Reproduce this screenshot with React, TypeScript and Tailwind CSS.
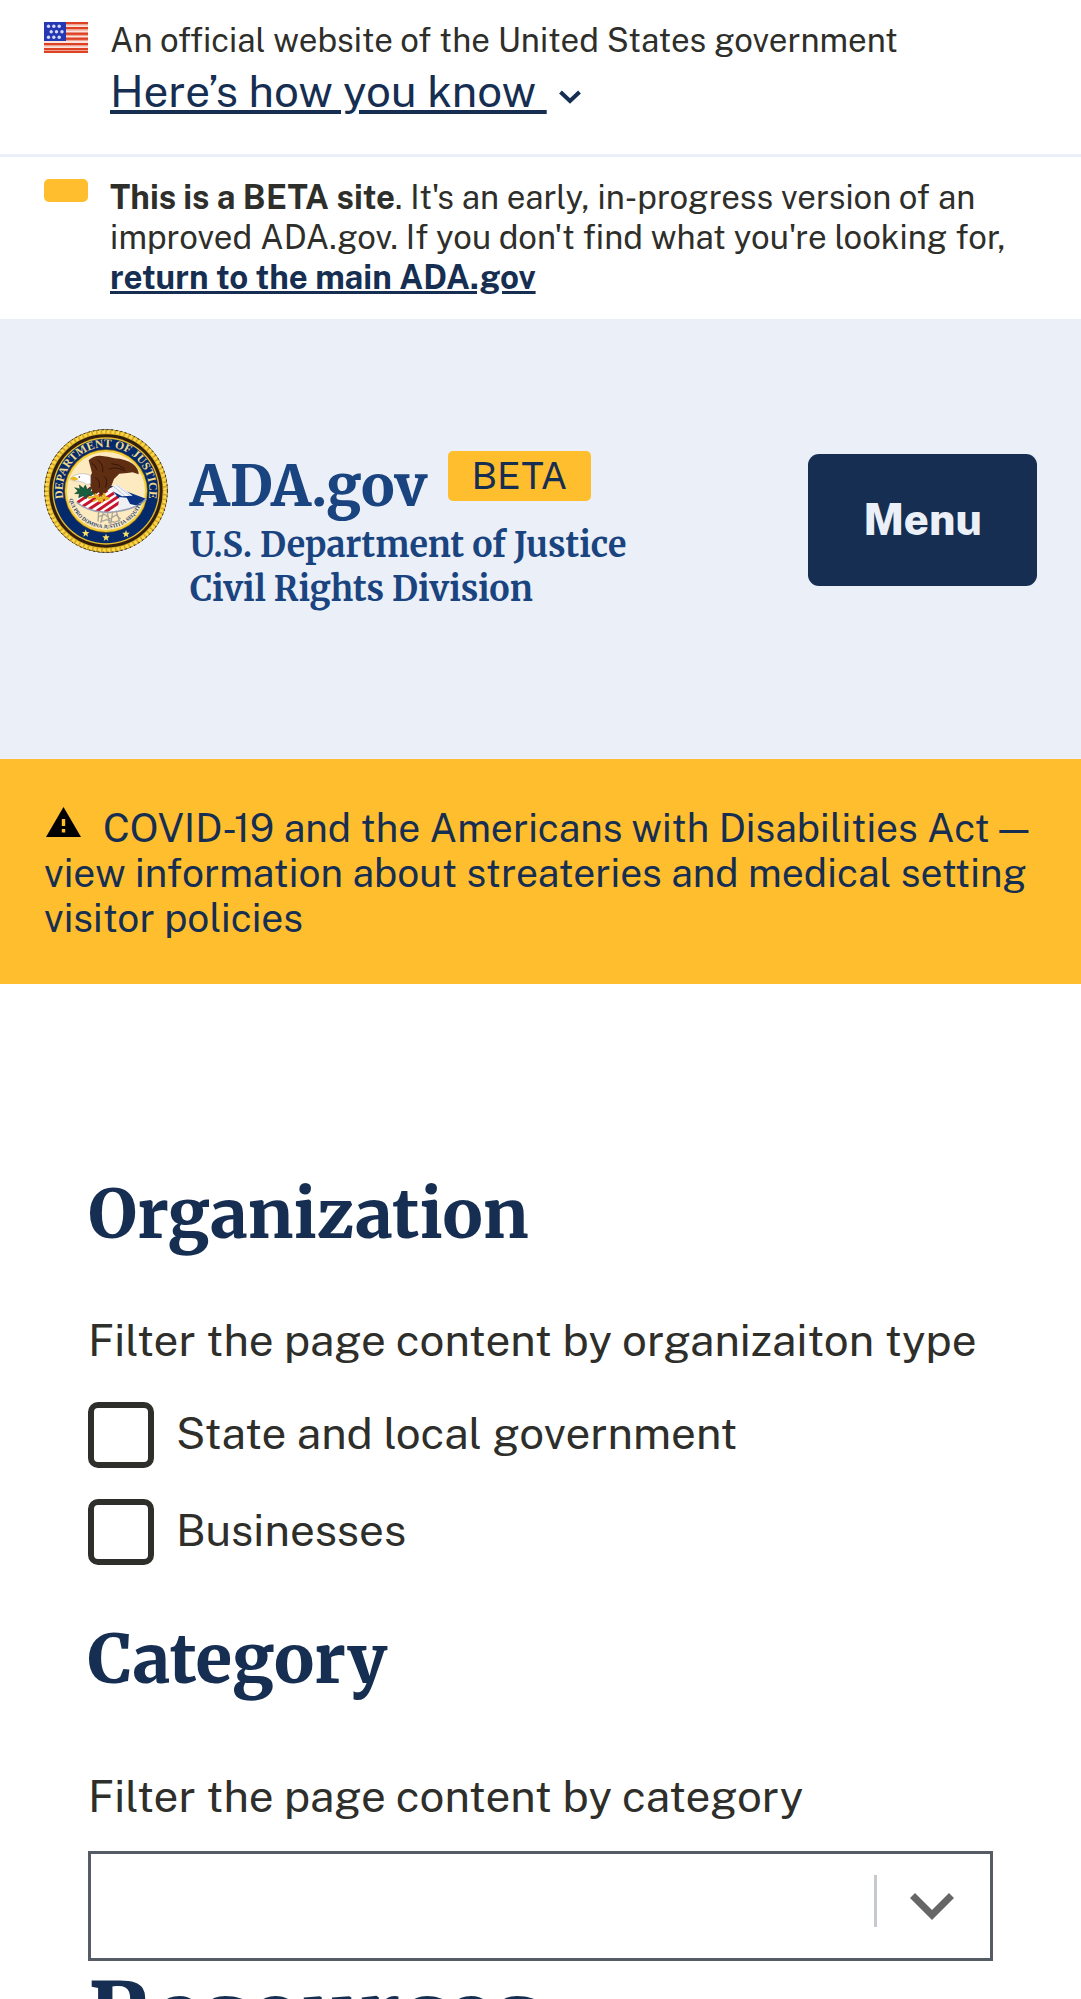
function FlagIcon() {
  return (
    <svg viewBox="0 0 44 31" className="mt-0.5 h-[31px] w-11 shrink-0" role="img" aria-label="U.S. flag">
      <rect width="44" height="31" fill="#fbe3de" />
      {[0, 5, 10.5, 15.5, 21, 26, 29].map((y) => (
        <rect key={y} y={y} width="44" height="2.4" fill="#dd4124" />
      ))}
      {[2.4, 7.6, 13, 18, 23.4].map((y) => (
        <rect key={y} y={y} width="44" height="1" fill="#f1a797" />
      ))}
      <rect width="22" height="19" fill="#2438b4" />
      {[
        [4.5, 4.3], [9.8, 4.3], [15.2, 4.3],
        [7.2, 9.7], [12.5, 9.7], [18, 9.7],
        [4.5, 15.2], [9.8, 15.2], [15.2, 15.2],
      ].map(([x, y]) => (
        <circle key={`${x}-${y}`} cx={x} cy={y} r="1.7" fill="#d5daf5" />
      ))}
    </svg>
  );
}

function JusticeSeal() {
  return (
    <svg viewBox="42 56 372 372" className="size-[124px] shrink-0" role="img" aria-label="Department of Justice seal">
      <defs>
        <path id="seal-top" d="M 103 276 A 130 130 0 1 1 353 276" />
        <path id="seal-motto" d="M 116 226 A 113 113 0 1 0 340 226" />
        <clipPath id="seal-shield">
          <path d="M140 268 L180 228 L238 224 L350 266 Q322 298 240 306 Q178 306 140 276 Z" />
        </clipPath>
      </defs>
      <circle cx="228" cy="242" r="185" fill="#2b2110" />
      <circle cx="228" cy="242" r="177" fill="none" stroke="#d9a520" strokeWidth="14" />
      <circle cx="228" cy="242" r="178" fill="none" stroke="#f8d84a" strokeWidth="11" strokeDasharray="9 5" />
      <circle cx="228" cy="242" r="184" fill="none" stroke="#2b2110" strokeWidth="3" strokeDasharray="5 9" />
      <circle cx="228" cy="242" r="166" fill="#3a1d0c" />
      <circle cx="228" cy="242" r="161" fill="#e6bd2c" />
      <circle cx="228" cy="242" r="157" fill="#052a6b" />
      <circle cx="228" cy="242" r="125" fill="#8a6410" />
      <circle cx="228" cy="242" r="123" fill="#f3cf3e" />
      <circle cx="228" cy="242" r="117" fill="#fdeac0" />
      <text fill="#f0d98a" fontSize="35" fontFamily="'Liberation Serif', serif" textAnchor="middle">
        <textPath href="#seal-top" startOffset="50%">DEPARTMENT OF JUSTICE</textPath>
      </text>
      <g clipPath="url(#seal-shield)">
        <rect x="130" y="215" width="230" height="95" fill="#ffffff" />
        <g stroke="#c8152f" strokeWidth="9">
          <path d="M132 262 L184 232" />
          <path d="M140 278 L206 234" />
          <path d="M152 292 L232 240" />
          <path d="M172 300 L252 248" />
          <path d="M198 304 L266 258" />
          <path d="M224 306 L280 268" />
        </g>
        <path d="M232 222 L355 262 L330 288 L276 276 Z" fill="#0b3384" />
        <path d="M268 260 L290 262 L310 298 L262 306 Z" fill="#eef0f4" />
      </g>
      <path d="M140 276 Q178 307 240 306 Q322 298 348 266" fill="none" stroke="#9ba3b5" strokeWidth="5" />
      <path d="M236 236 L262 222 L308 256 L276 258 Z" fill="#f2f4f8" />
      <path d="M250 228 L284 256 M260 224 L300 256" stroke="#a9b2c8" strokeWidth="2" />
      <path d="M206 304 l-2 30 M220 306 l-8 32 M232 306 l6 34 M248 304 l-6 38 M258 300 l10 32 M204 320 l20 -8 l16 14 l18 -12 l14 12 M212 334 l18 -6 l22 8 l18 -6" fill="none" stroke="#a9a697" strokeWidth="4" />
      <g fill="#17603f" stroke="#0b3b27" strokeWidth="1.5">
        <path d="M134 232 L150 236 L148 224 L160 234 L166 224 L172 238 L184 230 L182 244 L196 244 L184 256 L174 254 L168 266 L160 256 L146 262 L148 250 L134 250 L144 242 Z" />
      </g>
      <path
        d="M176 150 Q188 136 210 136 Q236 138 254 144 Q286 146 308 160 Q326 174 326 192 L308 186 L292 188 L268 190 L252 206 L246 222 Q240 238 228 244 L216 262 L206 246 L192 256 L184 234 L176 206 L186 188 Z"
        fill="#5f2d12"
      />
      <path d="M184 158 q14 6 16 20 M202 148 q20 14 16 38 M196 202 q16 8 12 30 M222 198 q14 10 4 34 M244 160 q22 0 40 16 M236 176 q24 -8 50 6" fill="none" stroke="#34170a" strokeWidth="3" />
      <path d="M122 204 Q136 190 158 190 Q172 190 182 196 L182 220 L170 222 Q160 214 144 212 Q130 214 122 208 Z" fill="#ffffff" stroke="#9ba3b5" strokeWidth="1.5" />
      <path d="M120 206 Q124 198 136 200 L146 206 L134 212 Z" fill="#e8b81f" />
      <circle cx="148" cy="200" r="2.5" fill="#222222" />
      <path d="M196 252 l6 14 l-10 6 M204 256 l4 16 l8 -2 M222 250 l6 18 l8 -4 M218 256 l-2 20 M176 262 l26 -4 M206 264 l26 -2" fill="none" stroke="#e3b51f" strokeWidth="6" strokeLinecap="round" />
      <text fill="#1d3d6d" fontSize="16" fontWeight="700" fontFamily="'Liberation Serif', serif" textAnchor="middle">
        <textPath href="#seal-motto" startOffset="50%">QUI PRO DOMINA JUSTITIA SEQUITUR</textPath>
      </text>
      {[
        [167, 369],
        [228, 382],
        [288, 371],
      ].map(([x, y]) => (
        <path
          key={x}
          transform={`translate(${x} ${y})`}
          d="M0 -12 L3 -4 L11 -4 L5 2 L7 10 L0 5 L-7 10 L-5 2 L-11 -4 L-3 -4 Z"
          fill="#f7dd6a"
        />
      ))}
    </svg>
  );
}

function Heading({ children }: { children: string }) {
  return (
    <h2 className="font-['Merriweather','Noto_Serif',serif] text-[67px] leading-[80px] font-extrabold text-[#162e51]">
      {children}
    </h2>
  );
}

function OrganizationOption({ id, label }: { id: string; label: string }) {
  return (
    <div className="flex items-start gap-[22px]">
      <input
        id={id}
        type="checkbox"
        className="size-[66px] shrink-0 appearance-none rounded-[10px] border-[6px] border-[#2e2e2a] bg-white checked:bg-[#162e51]"
      />
      <label htmlFor={id} className="text-[44px] leading-[62px]">
        {label}
      </label>
    </div>
  );
}

export default function App() {
  return (
    <div className="bg-white font-['Public_Sans','Inter',sans-serif] text-[#2e2e2a]">
      <section
        aria-label="Official government website"
        className="flex items-start gap-[22px] border-b-[3px] border-[#ebeff7] px-11 pt-5 pb-[38px]"
      >
        <FlagIcon />
        <div>
          <p className="text-[33px] leading-10">An official website of the United States government</p>
          <button type="button" className="mt-1.5 flex items-center gap-3 text-[44px] leading-[50px] text-[#162e51]">
            <span className="whitespace-pre underline">Here’s how you know </span>
            <svg viewBox="0 0 22 14" className="mt-3 h-3.5 w-[22px]" fill="none" stroke="currentColor" strokeWidth="4" aria-hidden="true">
              <path d="M1.5 2 L11 11 L20.500 2" />
            </svg>
          </button>
        </div>
      </section>

      <section aria-label="Beta notice" className="flex items-start gap-[22px] px-11 pt-5 pb-[22px]">
        <span className="mt-0.5 h-[23px] w-11 shrink-0 rounded-[5px] bg-[#ffbe2e]" />
        <p className="text-[33px] leading-10">
          <strong className="font-bold">This is a BETA site</strong>. It's an early, in-progress version of an improved
          ADA.gov. If you don't find what you're looking for,{' '}
          <a href="#main-site" className="font-bold text-[#162e51] underline">
            return to the main ADA.gov
          </a>
        </p>
      </section>

      <header className="flex items-start justify-between bg-[#ebeff7] px-11 pt-[110px] pb-[148px]">
        <a href="#home" className="flex items-start gap-[22px] font-['Merriweather','Noto_Serif',serif] font-bold text-[#1a4480]">
          <JusticeSeal />
          <span className="flex flex-col pt-[22px]">
            <span className="flex items-start gap-[21px]">
              <span className="pt-[7px] text-[56px] leading-[57px] font-extrabold">ADA.gov</span>
              <span className="rounded-[5px] bg-[#ffbe2e] px-[23px] font-['Public_Sans','Inter',sans-serif] text-[38px] leading-[50px] font-normal text-[#162e51]">
                BETA
              </span>
            </span>
            <span className="mt-2 text-[34px] leading-11">U.S. Department of Justice</span>
            <span className="text-[34px] leading-11">Civil Rights Division</span>
          </span>
        </a>
        <button
          type="button"
          className="mt-[25px] rounded-[11px] bg-[#162e51] px-[55px] pt-[35px] pb-[37px] text-[44px] leading-[60px] font-extrabold text-[#ebeff7]"
        >
          Menu
        </button>
      </header>

      <section aria-label="Alert" className="bg-[#ffbe2e] px-11 pt-[47px] pb-[43px]">
        <a href="#covid-19" className="block text-[39px] leading-[45px] text-[#162e51]">
          <svg viewBox="0 0 37 32" className="mr-[22px] inline h-8 w-[37px] align-[4px]" aria-hidden="true">
            <path d="M19.500 1 L37 31 H2 Z" fill="#000000" />
            <path d="M17.800 13 H21.200 V20 H17.800 Z M17.800 23 H21.200 V26.500 H17.800 Z" fill="#ffbe2e" />
          </svg>
          COVID-19 and the Americans with Disabilities Act — view information about streateries and medical setting
          visitor policies
        </a>
      </section>

      <main className="px-[88px] pt-[190px]">
        <Heading>Organization</Heading>
        <fieldset className="mt-[58px]">
          <legend className="text-[44px] leading-[56px]">Filter the page content by organizaiton type</legend>
          <div className="mt-[34px] flex flex-col gap-[31px]">
            <OrganizationOption id="state-local" label="State and local government" />
            <OrganizationOption id="businesses" label="Businesses" />
          </div>
        </fieldset>

        <div className="mt-[54px]">
          <Heading>Category</Heading>
        </div>
        <label htmlFor="category" className="mt-[69px] block text-[44px] leading-[56px]">
          Filter the page content by category
        </label>
        <div className="relative mt-[27px]">
          <select
            id="category"
            className="block h-[110px] w-full appearance-none border-[3px] border-[#565c65] bg-white px-6 text-[44px]"
          >
            <option value=""></option>
            <option value="parking">Parking</option>
          </select>
          <div className="pointer-events-none absolute top-6 right-[39px] flex items-end gap-[33px]">
            <span className="mb-2 h-[52px] w-[3px] bg-[#c6cace]" />
            <svg viewBox="0 0 44 28" className="mb-3.5 h-7 w-11" aria-hidden="true">
              <path d="M5 0 L22 17 L39 0 L44 5 L22 27 L0 5 Z" fill="#666666" />
            </svg>
          </div>
        </div>
        <h1 className="mt-1 font-['Merriweather','Noto_Serif',serif] text-[89px] leading-[100px] font-extrabold text-[#162e51]">
          Resources
        </h1>
      </main>
    </div>
  );
}
